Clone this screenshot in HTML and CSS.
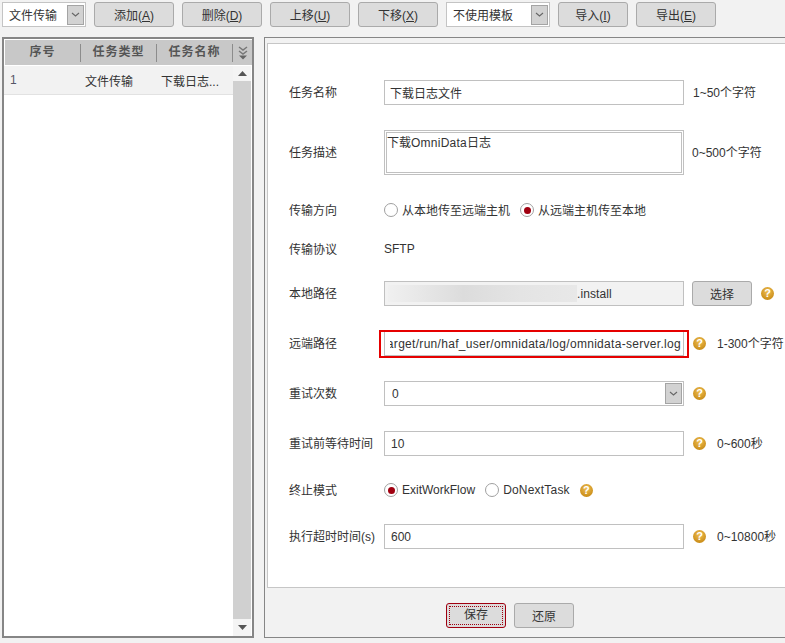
FILE: index.html
```html
<!DOCTYPE html>
<html lang="zh">
<head>
<meta charset="utf-8">
<title>任务</title>
<link rel="stylesheet" href="styles.css">
</head>
<body>
<div class="toolbar">
  <div class="select w84"><span class="select-text">文件传输</span><span class="arrow"><svg width="9" height="5" viewBox="0 0 9 5"><path d="M1 1l3.500 3L8 1" fill="none" stroke="#666" stroke-width="1.100"/></svg></span></div>
  <button class="btn w80">添加(<u>A</u>)</button>
  <button class="btn w80">删除(<u>D</u>)</button>
  <button class="btn w80">上移(<u>U</u>)</button>
  <button class="btn w80">下移(<u>X</u>)</button>
  <div class="select w104"><span class="select-text">不使用模板</span><span class="arrow"><svg width="9" height="5" viewBox="0 0 9 5"><path d="M1 1l3.500 3L8 1" fill="none" stroke="#666" stroke-width="1.100"/></svg></span></div>
  <button class="btn w70">导入(<u>I</u>)</button>
  <button class="btn w80">导出(<u>E</u>)</button>
</div>
<div class="main">
  <aside class="list">
    <div class="list-head">
      <span class="th">序号</span><span class="th">任务类型</span><span class="th">任务名称</span>
      <span class="th-more"><svg width="12" height="14" viewBox="0 0 12 14"><path d="M2 1l4 3 4-3M2 5l4 3 4-3" fill="none" stroke="#777" stroke-width="1.400"/><path d="M2 9.500h8L6 13.500z" fill="#666"/></svg></span>
    </div>
    <div class="list-body">
      <div class="rows">
        <div class="list-row"><span class="td1">1</span><span class="td2">文件传输</span><span class="td3">下载日志...</span></div>
      </div>
      <div class="scrollbar">
        <span class="sb-btn"><svg width="9" height="5" viewBox="0 0 9 5"><path d="M4.500 0L9 5H0z" fill="#555"/></svg></span>
        <span class="sb-track"></span>
        <span class="sb-btn end"><svg width="9" height="5" viewBox="0 0 9 5"><path d="M0 0h9L4.500 5z" fill="#555"/></svg></span>
      </div>
    </div>
  </aside>
  <section class="detail">
    <div class="form">
      <div class="row"><label class="lbl">任务名称</label><div class="input cjk">下载日志文件</div><span class="hint first">1~50个字符</span></div>
      <div class="row tall"><label class="lbl">任务描述</label><div class="textarea">下载<span class="wide">OmniData</span>日志</div><span class="hint second">0~500个字符</span></div>
      <div class="row short"><label class="lbl">传输方向</label>
        <span class="radio"></span><span class="radio-text">从本地传至远端主机</span>
        <span class="radio on gap-radio"></span><span class="radio-text">从远端主机传至本地</span></div>
      <div class="row short m19"><label class="lbl">传输协议</label><span class="plain">SFTP</span></div>
      <div class="row m22"><label class="lbl">本地路径</label><div class="input readonly"><span class="blurred"></span><span class="wide-sm">.install</span></div><button class="btn small pick">选择</button><span class="help">?</span></div>
      <div class="row"><label class="lbl">远端路径</label><div class="input path-wrap"><div class="path-clip"><span class="path">/opt/target/run/haf_user/omnidata/log/omnidata-server.log</span></div></div><span class="help">?</span><span class="hint">1-300个字符</span></div>
      <div class="row"><label class="lbl">重试次数</label><div class="input select-input"><span>0</span><span class="arrow"><svg width="9" height="5" viewBox="0 0 9 5"><path d="M1 1l3.500 3L8 1" fill="none" stroke="#666" stroke-width="1.100"/></svg></span></div><span class="help">?</span></div>
      <div class="row"><label class="lbl">重试前等待时间</label><div class="input num">10</div><span class="help">?</span><span class="hint">0~600秒</span></div>
      <div class="row short m24"><label class="lbl">终止模式</label>
        <span class="radio on"></span><span class="radio-text latin">ExitWorkFlow</span>
        <span class="radio gap-radio"></span><span class="radio-text latin spaced">DoNextTask</span><span class="help inline">?</span></div>
      <div class="row m24"><label class="lbl">执行超时时间(s)</label><div class="input num">600</div><span class="help">?</span><span class="hint">0~10800秒</span></div>
    </div>
    <div class="actions">
      <button class="btn small primary"><span class="focus">保存</span></button>
      <button class="btn small">还原</button>
    </div>
  </section>
</div>
</body>
</html>
```
FILE: styles.css
```css
* { box-sizing: border-box; }
html, body { margin: 0; height: 100%; }
body {
  width: 785px;
  height: 643px;
  overflow: hidden;
  background: #f2f2f2;
  font-family: "Liberation Sans", "Noto Sans CJK SC", sans-serif;
  font-size: 12px;
  color: #333;
}
.toolbar { display: flex; gap: 8px; padding: 2px 0 0 2px; height: 37px; align-items: flex-start; }
.select {
  height: 25px;
  display: flex;
  align-items: center;
  justify-content: space-between;
  background: #fff;
  border: 1px solid #c4c4c4;
  padding: 0 1px 0 6px;
}
.w84 { width: 84px; }
.w104 { width: 104px; }
.w80 { width: 80px; }
.w70 { width: 70px; }
.arrow {
  width: 17px;
  height: 20px;
  background: #d2d2d2;
  border: 1px solid #a4a4a4;
  display: flex;
  align-items: center;
  justify-content: center;
  flex: none;
}
.btn {
  height: 25px;
  padding: 0;
  background: #dcdcdc;
  border: 1px solid #aaa;
  border-radius: 3px;
  font: inherit;
  color: #333;
}
.main { display: flex; height: 601px; padding-left: 2px; gap: 10px; }
.list {
  width: 252px;
  height: 601px;
  border: 2px solid #868686;
  display: flex;
  flex-direction: column;
  background: #fff;
}
.list-head {
  height: 25px;
  background: #c8c8c8;
  margin: 1px 0 1px 1px;
  display: flex;
  align-items: center;
  font-weight: bold;
  color: #555;
  letter-spacing: 1px;
  flex: none;
}
.th { width: 76px; height: 18px; line-height: 17px; text-align: center; border-right: 1px solid #8c8c8c; }
.th-more { width: 19px; display: flex; justify-content: center; }
.list-body { flex: 1; display: flex; min-height: 0; }
.rows { flex: 1; }
.list-row {
  height: 29px;
  background: #f2f2f2;
  border-bottom: 1px solid #e2e2e2;
  display: flex;
  align-items: center;
}
.td1 { width: 81px; padding-left: 6px; color: #556; }
.td2 { width: 76px; }
.td3 { width: 72px; }
.scrollbar { width: 18px; margin-right: 1px; display: flex; flex-direction: column; flex: none; }
.sb-btn { height: 15px; background: #f4f4f4; display: flex; align-items: center; justify-content: center; flex: none; }
.sb-btn.end { height: 17px; }
.sb-track { flex: 1; background: #d0d0d0; }
.detail {
  flex: 1;
  height: 601px;
  border: 1px solid #868686;
  border-right: 0;
  padding: 5px 0 0 2px;
  display: flex;
  flex-direction: column;
}
.form {
  height: 545px;
  background: #fff;
  border: 1px solid #c6c6c6;
  border-right: 0;
  padding: 36px 0 0 21px;
}
.row { display: flex; align-items: center; height: 25px; margin-top: 25px; white-space: nowrap; }
.row:first-child { margin-top: 0; }
.row.tall { height: 45px; }
.row.short { height: 20px; }
.row.m19 { margin-top: 19px; }
.row.m22 { margin-top: 22px; }
.row.m24 { margin-top: 24px; }
.lbl { width: 95px; flex: none; padding-bottom: 2px; }
.input {
  width: 300px;
  height: 25px;
  flex: none;
  border: 1px solid #c0c0c0;
  background: #fff;
  padding: 0 5px;
  display: flex;
  align-items: center;
}
.input.cjk { padding-bottom: 1px; }
.input.num { padding-left: 6px; }
.readonly { background: #f2f2f2; padding: 0 0 0 3px; }
.blurred {
  width: 189px;
  height: 17px;
  flex: none;
  background: linear-gradient(90deg, #f0f0f0, #dcdcdc 40%, #e4e4e4 70%, #e8e8e8);
}
.wide-sm { letter-spacing: .1px; }
.wide { letter-spacing: .25px; }
.spaced { letter-spacing: .2px; }
.path-wrap { padding: 0 2px 0 5px; position: relative; }
.path-wrap::after {
  content: "";
  position: absolute;
  top: -2px;
  left: -6px;
  right: -6px;
  bottom: -3px;
  border: 2px solid #e60000;
}
.path-clip { flex: 1; min-width: 0; display: flex; justify-content: flex-end; overflow: hidden; }
.path { flex: none; letter-spacing: .3px; }
.select-input { justify-content: space-between; padding: 0 1px 0 7px; }
.select-input .arrow { height: 21px; }
.textarea {
  width: 300px;
  height: 45px;
  flex: none;
  border: 3px double #c0c0c0;
  padding: 2px 0 0;
  line-height: 17px;
}
.hint { margin-left: 11px; padding-bottom: 2px; }
.hint.first { margin-left: 9px; }
.hint.second { margin-left: 8px; }
.help {
  width: 13px;
  height: 13px;
  flex: none;
  margin-left: 9px;
  border-radius: 50%;
  background: radial-gradient(circle at 50% 35%, #efbf55, #c88a14 80%, #a8720f);
  color: #fff;
  font-size: 11px;
  font-weight: bold;
  line-height: 13px;
  text-align: center;
}
.small { width: 60px; height: 25px; }
.pick { margin-left: 8px; }
.radio {
  width: 14px;
  height: 14px;
  flex: none;
  border-radius: 50%;
  border: 1px solid #a0a0a0;
  background: #fff;
  display: flex;
  align-items: center;
  justify-content: center;
}
.radio.on::after { content: ""; width: 7px; height: 7px; border-radius: 50%; background: #a00010; }
.radio-text { margin-left: 4px; padding-bottom: 2px; }
.radio-text.latin { padding-bottom: 0; }
.gap-radio { margin-left: 10px; }
.help.inline { margin-left: 10px; }
.actions { display: flex; gap: 8px; padding: 15px 0 0 179px; }
.primary { border-color: #a00010; padding: 2px; }
.focus { display: block; height: 100%; line-height: 17px; border: 1px dotted #a00010; }
```
